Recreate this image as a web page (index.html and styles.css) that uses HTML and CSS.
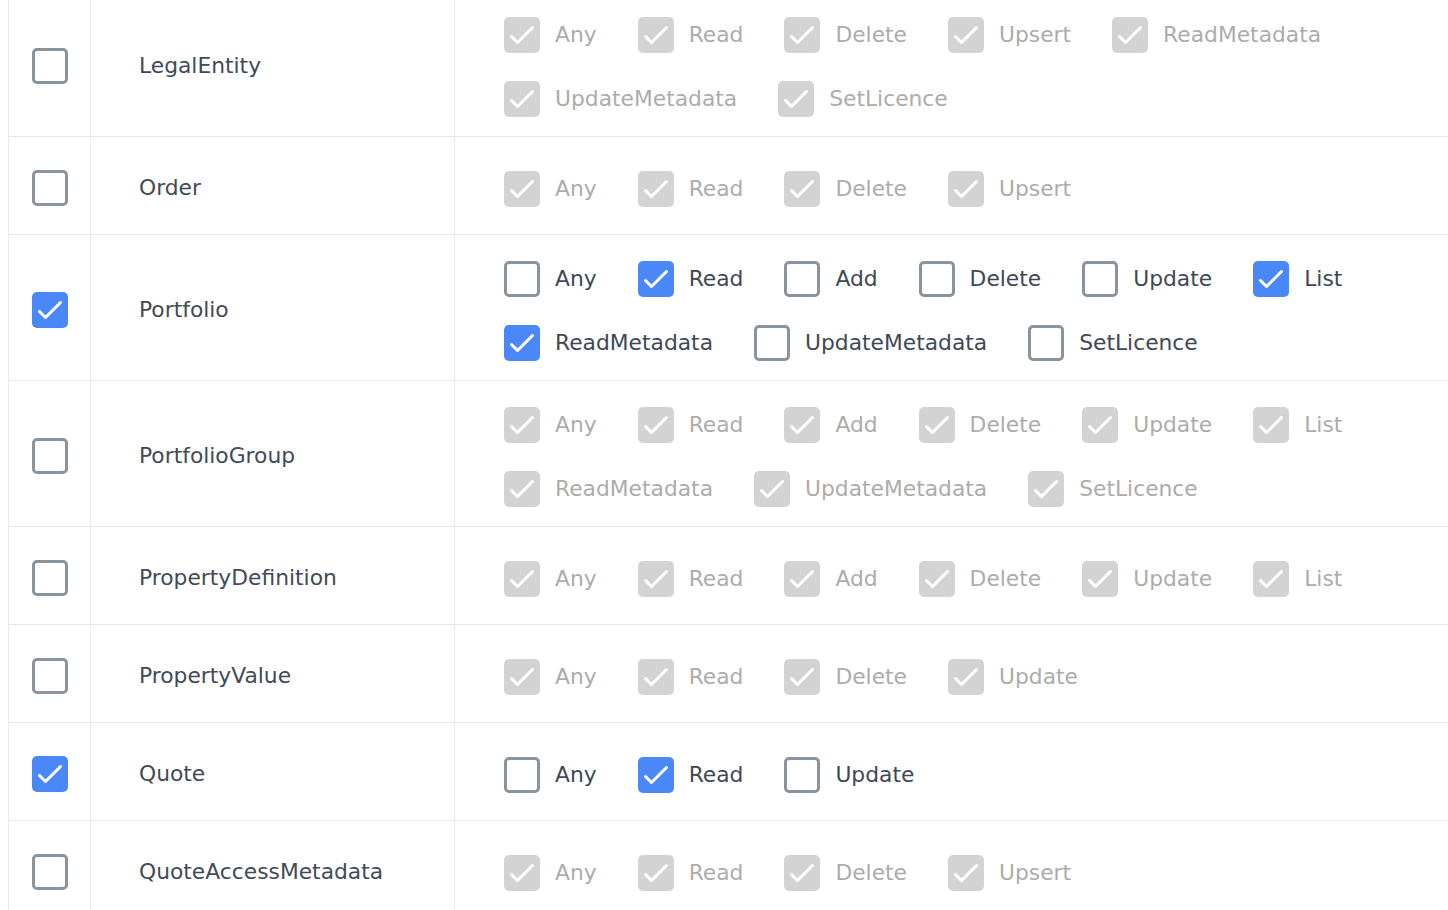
FILE: index.html
```html
<!DOCTYPE html>
<html>
<head>
<meta charset="utf-8">
<link rel="stylesheet" href="styles.css">
</head>
<body>
<div class="table">
  <div class="row">
    <div class="cell sel"><span class="cb"></span></div>
    <div class="cell name">LegalEntity</div>
    <div class="cell opts">
      <label class="opt dis"><span class="cb"></span><span class="lbl">Any</span></label>
      <label class="opt dis"><span class="cb"></span><span class="lbl">Read</span></label>
      <label class="opt dis"><span class="cb"></span><span class="lbl">Delete</span></label>
      <label class="opt dis"><span class="cb"></span><span class="lbl">Upsert</span></label>
      <label class="opt dis"><span class="cb"></span><span class="lbl">ReadMetadata</span></label>
      <label class="opt dis"><span class="cb"></span><span class="lbl">UpdateMetadata</span></label>
      <label class="opt dis"><span class="cb"></span><span class="lbl">SetLicence</span></label>
    </div>
  </div>
  <div class="row">
    <div class="cell sel"><span class="cb"></span></div>
    <div class="cell name">Order</div>
    <div class="cell opts">
      <label class="opt dis"><span class="cb"></span><span class="lbl">Any</span></label>
      <label class="opt dis"><span class="cb"></span><span class="lbl">Read</span></label>
      <label class="opt dis"><span class="cb"></span><span class="lbl">Delete</span></label>
      <label class="opt dis"><span class="cb"></span><span class="lbl">Upsert</span></label>
    </div>
  </div>
  <div class="row">
    <div class="cell sel"><span class="cb on"></span></div>
    <div class="cell name">Portfolio</div>
    <div class="cell opts">
      <label class="opt"><span class="cb"></span><span class="lbl">Any</span></label>
      <label class="opt"><span class="cb on"></span><span class="lbl">Read</span></label>
      <label class="opt"><span class="cb"></span><span class="lbl">Add</span></label>
      <label class="opt"><span class="cb"></span><span class="lbl">Delete</span></label>
      <label class="opt"><span class="cb"></span><span class="lbl">Update</span></label>
      <label class="opt"><span class="cb on"></span><span class="lbl">List</span></label>
      <label class="opt"><span class="cb on"></span><span class="lbl">ReadMetadata</span></label>
      <label class="opt"><span class="cb"></span><span class="lbl">UpdateMetadata</span></label>
      <label class="opt"><span class="cb"></span><span class="lbl">SetLicence</span></label>
    </div>
  </div>
  <div class="row">
    <div class="cell sel"><span class="cb"></span></div>
    <div class="cell name">PortfolioGroup</div>
    <div class="cell opts">
      <label class="opt dis"><span class="cb"></span><span class="lbl">Any</span></label>
      <label class="opt dis"><span class="cb"></span><span class="lbl">Read</span></label>
      <label class="opt dis"><span class="cb"></span><span class="lbl">Add</span></label>
      <label class="opt dis"><span class="cb"></span><span class="lbl">Delete</span></label>
      <label class="opt dis"><span class="cb"></span><span class="lbl">Update</span></label>
      <label class="opt dis"><span class="cb"></span><span class="lbl">List</span></label>
      <label class="opt dis"><span class="cb"></span><span class="lbl">ReadMetadata</span></label>
      <label class="opt dis"><span class="cb"></span><span class="lbl">UpdateMetadata</span></label>
      <label class="opt dis"><span class="cb"></span><span class="lbl">SetLicence</span></label>
    </div>
  </div>
  <div class="row">
    <div class="cell sel"><span class="cb"></span></div>
    <div class="cell name">PropertyDefinition</div>
    <div class="cell opts">
      <label class="opt dis"><span class="cb"></span><span class="lbl">Any</span></label>
      <label class="opt dis"><span class="cb"></span><span class="lbl">Read</span></label>
      <label class="opt dis"><span class="cb"></span><span class="lbl">Add</span></label>
      <label class="opt dis"><span class="cb"></span><span class="lbl">Delete</span></label>
      <label class="opt dis"><span class="cb"></span><span class="lbl">Update</span></label>
      <label class="opt dis"><span class="cb"></span><span class="lbl">List</span></label>
    </div>
  </div>
  <div class="row">
    <div class="cell sel"><span class="cb"></span></div>
    <div class="cell name">PropertyValue</div>
    <div class="cell opts">
      <label class="opt dis"><span class="cb"></span><span class="lbl">Any</span></label>
      <label class="opt dis"><span class="cb"></span><span class="lbl">Read</span></label>
      <label class="opt dis"><span class="cb"></span><span class="lbl">Delete</span></label>
      <label class="opt dis"><span class="cb"></span><span class="lbl">Update</span></label>
    </div>
  </div>
  <div class="row">
    <div class="cell sel"><span class="cb on"></span></div>
    <div class="cell name">Quote</div>
    <div class="cell opts">
      <label class="opt"><span class="cb"></span><span class="lbl">Any</span></label>
      <label class="opt"><span class="cb on"></span><span class="lbl">Read</span></label>
      <label class="opt"><span class="cb"></span><span class="lbl">Update</span></label>
    </div>
  </div>
  <div class="row">
    <div class="cell sel"><span class="cb"></span></div>
    <div class="cell name">QuoteAccessMetadata</div>
    <div class="cell opts">
      <label class="opt dis"><span class="cb"></span><span class="lbl">Any</span></label>
      <label class="opt dis"><span class="cb"></span><span class="lbl">Read</span></label>
      <label class="opt dis"><span class="cb"></span><span class="lbl">Delete</span></label>
      <label class="opt dis"><span class="cb"></span><span class="lbl">Upsert</span></label>
    </div>
  </div>
</div>
</body>
</html>
```
FILE: styles.css
```css
html, body {
  margin: 0;
  padding: 0;
  background: #ffffff;
  overflow: hidden;
}
body {
  font-family: "DejaVu Sans", "Open Sans", sans-serif;
  font-size: 21.8px;
  color: #3d4959;
}
.table {
  margin: -9px 0 0 8px;
  width: 1500px;
  border-left: 1px solid #ebebeb;
}
.row {
  display: grid;
  grid-template-columns: 82px 364px 1fr;
  min-height: 97px;
  border-bottom: 1px solid #e8e8e8;
}
.cell {
  display: flex;
  align-items: center;
}
.sel {
  padding: 5px 0 0 23px;
  border-right: 1px solid #ebebeb;
}
.name {
  padding: 3px 0 0 48px;
  border-right: 1px solid #ebebeb;
  color: #3f4b5b;
}
.opts {
  flex-wrap: wrap;
  align-content: center;
  row-gap: 28px;
  padding: 26px 0 19px 49px;
  width: 1002px;
  box-sizing: border-box;
}
.opt {
  display: flex;
  align-items: center;
  margin-right: 41px;
  height: 36px;
  white-space: nowrap;
}
.lbl {
  margin-left: 15px;
  line-height: 36px;
}
.cb {
  width: 36px;
  height: 36px;
  box-sizing: border-box;
  border: 3px solid #8a949f;
  border-radius: 5px;
  flex: none;
  background: #ffffff;
}
.cb.on,
.dis .cb {
  border: none;
  background-color: #4a88f7;
  background-image: url("data:image/svg+xml,%3Csvg xmlns='http://www.w3.org/2000/svg' width='36' height='36' viewBox='0 0 36 36'%3E%3Cpath d='M7.5 19.5 L13.5 25.5 L28.5 10.5' fill='none' stroke='%23ffffff' stroke-width='3' stroke-linecap='round' stroke-linejoin='round'/%3E%3C/svg%3E");
  background-repeat: no-repeat;
  background-size: 36px 36px;
}
.dis .cb {
  background-color: #d3d3d3;
}
.dis .lbl {
  color: #acacac;
}
```
